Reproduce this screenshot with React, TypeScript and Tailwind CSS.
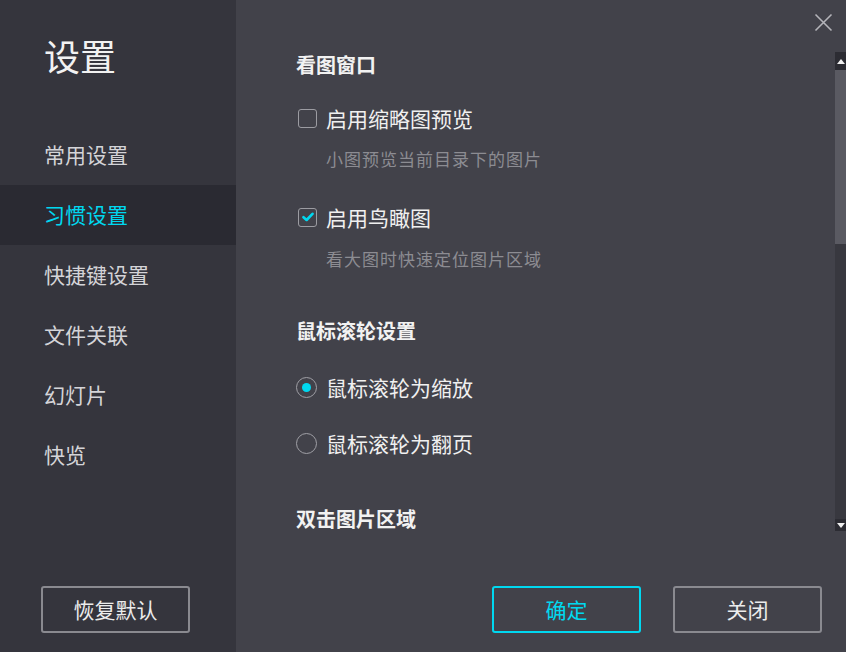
import React from "react";

const font = { fontFamily: '"Noto Sans CJK SC", "Noto Sans", sans-serif' };

function Checkbox({ checked }: { checked: boolean }) {
  return (
    <span className="flex h-[19px] w-[19px] items-center justify-center rounded-[3px] border-[1.5px] border-[#9c9ca2]">
      {checked && (
        <svg width="12" height="10" viewBox="0 0 12 10">
          <path d="M1.5 5.2 L4.6 8 L10.5 1.8" fill="none" stroke="#00d8f0" strokeWidth="2.6" strokeLinecap="round" strokeLinejoin="round" />
        </svg>
      )}
    </span>
  );
}

function Radio({ checked }: { checked: boolean }) {
  return (
    <span className="flex h-[21px] w-[21px] items-center justify-center rounded-full border-[1.5px] border-[#a0a0a6]">
      {checked && <span className="h-[9px] w-[9px] rounded-full bg-[#00d8f0]" />}
    </span>
  );
}

export default function App() {
  const nav = ["常用设置", "习惯设置", "快捷键设置", "文件关联", "幻灯片", "快览"];
  return (
    <div className="flex h-[652px] w-[846px] overflow-hidden bg-[#42424a]" style={font}>
      <aside className="flex h-full w-[236px] shrink-0 flex-col bg-[#35353d]">
        <div className="mt-[33px] pl-[44px] text-[36px] leading-[44px] text-[#f2f2f2]">设置</div>
        <nav className="mt-[48px] flex flex-col">
          {nav.map((n, i) => (
            <div
              key={n}
              className={
                i === 1
                  ? "flex h-[60px] items-center bg-[#2a2a32] pl-[44px] text-[21px] text-[#00d8f0]"
                  : "flex h-[60px] items-center pl-[44px] text-[21px] text-[#d4d4d8]"
              }
            >
              {n}
            </div>
          ))}
        </nav>
        <div className="mt-auto mb-[19px] ml-[41px]">
          <button className="flex h-[47px] w-[149px] items-center justify-center rounded-[3px] border-2 border-[#8a8a90] text-[21px] text-[#ececec]">
            恢复默认
          </button>
        </div>
      </aside>

      <main className="relative flex h-full flex-1 flex-col">
        <button className="absolute right-[13px] top-[13px]">
          <svg width="19" height="19" viewBox="0 0 19 19">
            <path d="M1.5 1.5 L17.5 17.5 M17.5 1.5 L1.5 17.5" stroke="#b4b4ba" strokeWidth="1.6" />
          </svg>
        </button>
        <div className="mt-[50px] flex h-[484px]">
          <div className="flex-1 overflow-hidden pl-[60px]">
            <div className="text-[20px] font-bold leading-[30px] text-[#f2f2f2]">看图窗口</div>
            <div className="mt-[24px] flex h-[28px] items-center">
              <span className="ml-[2px]"><Checkbox checked={false} /></span>
              <span className="ml-[9px] text-[21px] leading-[28px] text-[#f0f0f0]">启用缩略图预览</span>
            </div>
            <div className="mt-[15px] pl-[30px] text-[17px] leading-[24px] tracking-[1px] text-[#8c8c92]">小图预览当前目录下的图片</div>
            <div className="mt-[32px] flex h-[28px] items-center">
              <span className="ml-[2px]"><Checkbox checked={true} /></span>
              <span className="ml-[9px] text-[21px] leading-[28px] text-[#f0f0f0]">启用鸟瞰图</span>
            </div>
            <div className="mt-[16px] pl-[30px] text-[17px] leading-[24px] tracking-[1px] text-[#8c8c92]">看大图时快速定位图片区域</div>

            <div className="mt-[45px] text-[20px] font-bold leading-[30px] text-[#f2f2f2]">鼠标滚轮设置</div>
            <div className="mt-[27px] flex h-[28px] items-center">
              <Radio checked={true} />
              <span className="ml-[9px] text-[21px] leading-[28px] text-[#f0f0f0]">鼠标滚轮为缩放</span>
            </div>
            <div className="mt-[28px] flex h-[28px] items-center">
              <Radio checked={false} />
              <span className="ml-[9px] text-[21px] leading-[28px] text-[#f0f0f0]">鼠标滚轮为翻页</span>
            </div>

            <div className="mt-[47px] text-[20px] font-bold leading-[30px] text-[#f2f2f2]">双击图片区域</div>
          </div>
          <div className="mt-[2px] flex h-[479px] w-[11px] shrink-0 flex-col bg-[#38383f]">
            <div className="flex h-[18px] items-center justify-center bg-[#2c2c33]">
              <svg width="8" height="5" viewBox="0 0 8 5"><path d="M0 5 L4 0 L8 5 Z" fill="#f0f0f0" /></svg>
            </div>
            <div className="h-[174px] bg-[#5a5a62]" />
            <div className="flex-1" />
            <div className="flex h-[12px] items-center justify-center bg-[#2c2c33]">
              <svg width="8" height="5" viewBox="0 0 8 5"><path d="M0 0 L8 0 L4 5 Z" fill="#f0f0f0" /></svg>
            </div>
          </div>
        </div>
        <div className="mt-auto mb-[19px] mr-[24px] flex justify-end gap-[32px]">
          <button className="flex h-[47px] w-[149px] items-center justify-center rounded-[3px] border-2 border-[#00d8f0] text-[21px] text-[#00d8f0]">
            确定
          </button>
          <button className="flex h-[47px] w-[149px] items-center justify-center rounded-[3px] border-2 border-[#8a8a90] text-[21px] text-[#ececec]">
            关闭
          </button>
        </div>
      </main>
    </div>
  );
}
